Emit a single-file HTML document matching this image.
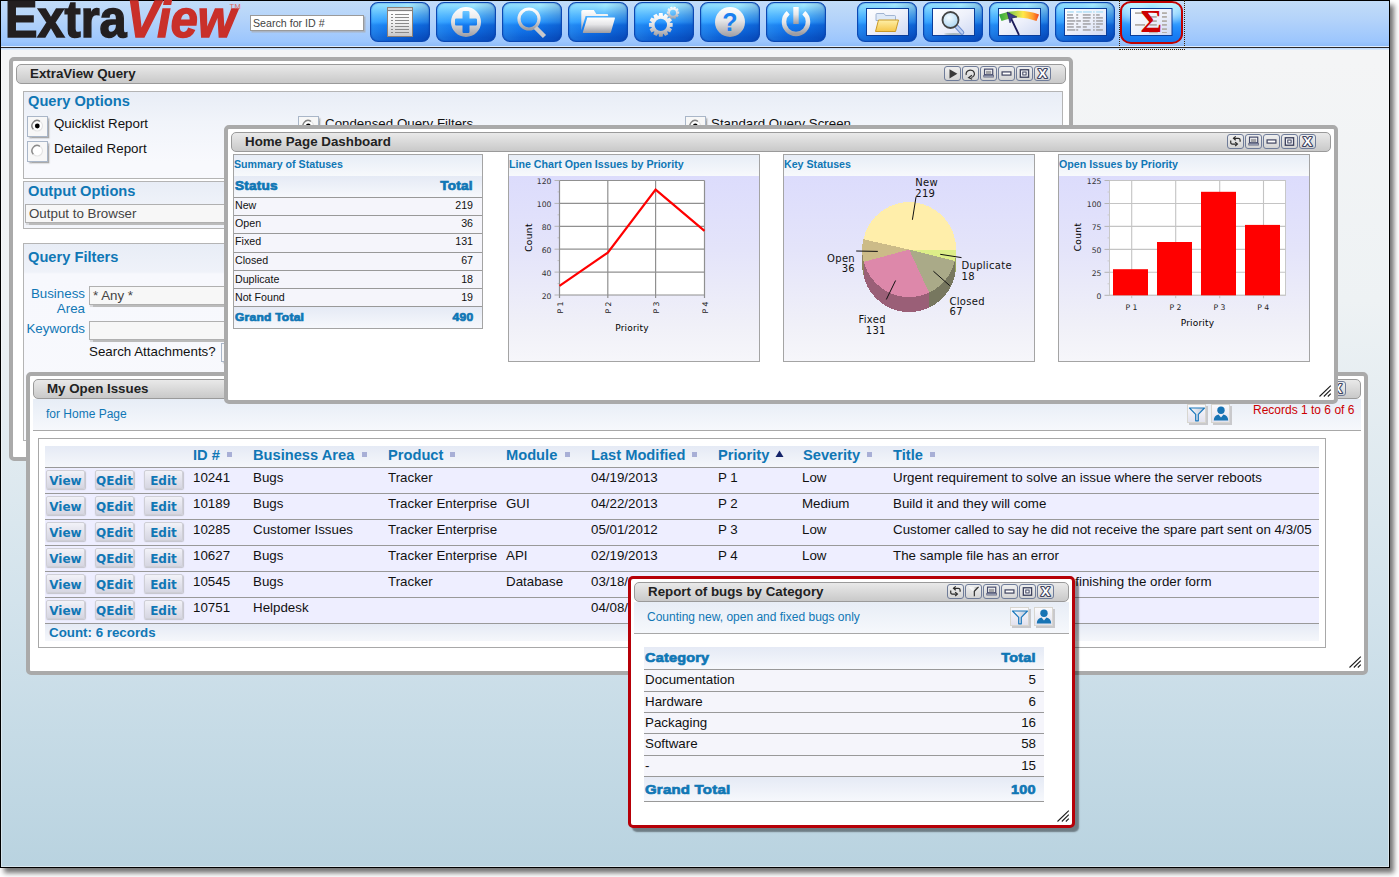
<!DOCTYPE html>
<html>
<head>
<meta charset="utf-8">
<title>ExtraView</title>
<style>
html,body{margin:0;padding:0;background:#fff;}
body{width:1399px;height:877px;overflow:hidden;position:relative;font-family:"Liberation Sans",Arial,sans-serif;font-size:13.33px;color:#111;}
#frame{position:absolute;left:0;top:0;width:1388px;height:866px;border:1px solid #000;box-shadow:4px 5px 5px rgba(0,0,0,.55),inset 0 0 0 1px rgba(255,255,255,.4);
 background:linear-gradient(#f4f5f6 0,#f4f5f6 60px,#eef2f4 300px,#d3e3ec 600px,#b9d3e0 866px);}
#content{position:absolute;left:0;top:0;width:1389px;height:867px;overflow:hidden}
.abs{position:absolute}
/* header */
#hdr{position:absolute;left:1px;top:1px;width:1388px;height:45px;background:linear-gradient(#c2dcf8 0,#b4d3fa 40%,#9cc6fd 90%,#8fbcf8 100%);}
#hdrline{position:absolute;left:1px;top:46px;width:1388px;height:2px;background:linear-gradient(#dcecff 0,#dcecff 40%,#2a2626 60%,#2a2626 100%);}
#hdrlow{position:absolute;left:1px;top:48px;width:1388px;height:2px;background:linear-gradient(#b8d6fa,#e4eefa);}
#logo{position:absolute;left:5px;top:-10px;font-weight:bold;font-size:51px;line-height:60px;white-space:nowrap;color:#231f20;letter-spacing:0;-webkit-text-stroke:1.5px #231f20;transform:scaleX(.953);transform-origin:0 0}
#logo i{color:#c9302a;letter-spacing:0;margin-left:0;-webkit-text-stroke:1.5px #c9302a}
#tm{position:absolute;left:229.5px;top:2.5px;font-size:7.5px;line-height:8px;color:#e0685e;letter-spacing:.3px}
#search{position:absolute;left:250px;top:15px;width:110px;height:14px;background:#fff;border:1px solid #9a9a9a;box-shadow:1.5px 1.5px 0 #a9b4c4;font-size:10.67px;line-height:15px;padding-left:2px;color:#444;box-sizing:content-box;white-space:nowrap}
.tb{position:absolute;top:2px;width:58px;height:38px;border:1px solid #0a48b4;border-radius:8px/7.5px;background:linear-gradient(105deg,rgba(90,195,255,.34) 0%,rgba(40,140,255,.1) 40%,rgba(0,40,150,0) 55%,rgba(0,30,130,.3) 100%),linear-gradient(#b0f2ff 0,#8adaff 14%,#56b8ff 32%,#2c9aff 50%,#1278ee 58%,#0e6ce2 75%,#0a5cd0 92%,#0c5ed2 100%);box-shadow:inset 0 0 1.5px #0838a0;}
.tb svg{position:absolute;left:0;top:0}
/* windows */
.win{position:absolute;border:4px solid #aaa;border-radius:5px;background:#fff;box-sizing:border-box;}
.tbar{position:absolute;box-sizing:border-box;left:3px;right:3px;top:3px;height:20px;border:1px solid #9a9a9a;border-radius:5px;background:linear-gradient(#e9e9e9,#d9d9d9 50%,#c9c9c9);font-weight:bold;font-size:13.33px;line-height:18px;color:#222;padding-left:13px;white-space:nowrap}
.h{color:#1077b5;font-weight:bold}

.ti{position:absolute;top:1px;width:15px;height:13px;border:1px solid #6f7c99;border-radius:3px;background:linear-gradient(rgba(255,255,255,.35),rgba(255,255,255,.1));}
.ti svg{position:absolute;left:0;top:0}
.pan{position:absolute;border:1px solid #b4b4b4;background:linear-gradient(#e8edf6 0,#f1f4fa 30px,#f8f9fd 70px);box-sizing:border-box}
.ph{position:absolute;left:4px;font-weight:bold;font-size:14.67px;color:#1077b5;white-space:nowrap;line-height:16px}
.rb{position:absolute;width:19px;height:19px;border:1px solid #a9b6c8;background:#f7f7f7;box-shadow:1.5px 1.5px 1.5px #aaa;box-sizing:content-box}
.rb svg{position:absolute;left:0;top:0}
.lbl{position:absolute;white-space:nowrap;font-size:13.33px;line-height:16px;color:#111}
.sel{position:absolute;border:1px solid #b0b0b0;background:#f7f7f7;box-shadow:1px 1.5px 1px #bbb;height:17px;font-size:13.33px;line-height:17px;color:#444;padding-left:3px;white-space:nowrap;box-sizing:content-box}
.sub{position:absolute;background:linear-gradient(#e7edf6,#f6f8fc);border-bottom:1px solid #a8a8a8;box-sizing:border-box}
.sub .t{position:absolute;font-size:12px;color:#1077b5;white-space:nowrap;line-height:14px}
.ib{position:absolute;width:17px;height:17px;border:1px solid #d8d6d0;background:linear-gradient(#fafafd,#e2e2ee);box-shadow:2px 2px 0 #c9c9cc}
.ib svg{position:absolute;left:0;top:0}
.box{position:absolute;border:1px solid #a8a8a8;box-sizing:border-box;background:#fff}
.row{position:absolute;left:0;right:0;height:25px;background:#eeeeff;border-top:1px solid #999;}
.row span{position:absolute;top:2px;white-space:nowrap;font-size:13.33px;line-height:16px;color:#111}
.hrow{position:absolute;left:0;right:0;background:linear-gradient(#e5eaf5,#f5f7fb)}
.hrow span{position:absolute;white-space:nowrap;font-weight:bold;font-size:14.67px;line-height:16px;color:#1077b5}
.hrow i{position:absolute;width:5px;height:5px;background:#a8afd6}
.btn{position:absolute;top:2px;width:37px;height:17px;border:1px solid #cfcfd6;border-radius:2px;background:linear-gradient(#f2f2f8,#e2e2ec 55%,#d6d6e2);box-shadow:.5px 1px 1px #c4c4cc;font-family:"DejaVu Sans","Liberation Sans",sans-serif;font-weight:bold;font-size:12px;line-height:21px;color:#1077b5;text-align:center;letter-spacing:0;overflow:hidden}
.grip{position:absolute;width:13px;height:13px}
.dp{position:absolute;border:1px solid #a4a4a4;box-sizing:border-box;background:#f6f6fb}
.dt{position:absolute;left:0;right:0;top:0;height:21px;background:linear-gradient(#e7edf6,#f7f9fc);font-weight:bold;font-size:10.67px;line-height:19px;color:#1077b5;padding-left:0;white-space:nowrap}
.ca{position:absolute;left:0;top:21px;width:250px;height:185px;background:linear-gradient(#dcdcfc 0,#e4e4fa 40%,#f0f0f8 80%,#f6f6fa 100%)}
.ca svg{position:absolute;left:0;top:0}
.sh{position:absolute;left:0;right:0;background:linear-gradient(#e5eaf5,#f6f8fc)}
.ab{position:absolute;top:2px;font-weight:bold;font-size:12px;line-height:15px;color:#1077b5;-webkit-text-stroke:.7px #1077b5;white-space:nowrap;transform:scaleX(1.13);transform-origin:0 50%;letter-spacing:.2px}
.ab.r{transform-origin:100% 50%}
.sr{position:absolute;left:0;right:0;height:17px;border-top:1px solid #999;background:#f5f5fb}
.sr span{position:absolute;top:1px;font-size:10.67px;line-height:14px;color:#111;white-space:nowrap}
.sr.rr span{font-size:13.33px;line-height:16px;top:2px}
.sr.sh{background:linear-gradient(#e5eaf5,#f6f8fc)}
</style>
</head>
<body>
<div id="frame"></div>
<div id="content">
 <div id="hdr"></div><div id="hdrline"></div><div id="hdrlow"></div>
 <div id="logo">Extra<i>View</i></div><div id="tm">TM</div>
 <div id="search">Search for ID #</div>
<svg width="0" height="0" style="position:absolute"><defs>
<linearGradient id="gw" x1="0" y1="0" x2="0" y2="1"><stop offset="0" stop-color="#ffffff"/><stop offset=".45" stop-color="#e6e6e8"/><stop offset="1" stop-color="#9c9ca2"/></linearGradient>
<linearGradient id="gp" x1="0" y1="0" x2="1" y2="1"><stop offset="0" stop-color="#ffffff"/><stop offset=".5" stop-color="#eef1fb"/><stop offset="1" stop-color="#cfd9f3"/></linearGradient>
<linearGradient id="gf" x1="0" y1="0" x2="0" y2="1"><stop offset="0" stop-color="#fff0a8"/><stop offset="1" stop-color="#f5c64a"/></linearGradient>
<linearGradient id="gg" x1="0" y1="0" x2="1" y2="0"><stop offset="0" stop-color="#2faa3c"/><stop offset=".35" stop-color="#9ed24a"/><stop offset=".6" stop-color="#ffe94a"/><stop offset=".85" stop-color="#ff9a2e"/><stop offset="1" stop-color="#f2451f"/></linearGradient>
<radialGradient id="gl" cx=".4" cy=".35" r=".7"><stop offset="0" stop-color="#f4fbff"/><stop offset="1" stop-color="#a9d4f2"/></radialGradient>
<linearGradient id="gd" x1="0" y1="0" x2="0" y2="1"><stop offset="0" stop-color="#ffffff"/><stop offset=".5" stop-color="#f0f0f0"/><stop offset="1" stop-color="#c8c8ca"/></linearGradient></defs></svg>
<div class="tb" style="left:370px;"><svg width="58" height="38" viewBox="1 1 58 38"><rect x="17" y="5" width="26" height="30" fill="#8c8078"/><rect x="18" y="9" width="24" height="25" fill="url(#gd)"/><rect x="18" y="6" width="24" height="2.500" fill="#d4d4d4"/><rect x="18" y="8.200" width="24" height=".9" fill="#777"/><rect x="21" y="12" width="2" height="1" fill="#888"/><rect x="25" y="12" width="14" height="1" fill="#8a8a8a"/><rect x="21" y="15" width="2" height="1" fill="#888"/><rect x="25" y="15" width="14" height="1" fill="#8a8a8a"/><rect x="21" y="18" width="2" height="1" fill="#888"/><rect x="25" y="18" width="14" height="1" fill="#8a8a8a"/><rect x="21" y="21" width="2" height="1" fill="#888"/><rect x="25" y="21" width="14" height="1" fill="#8a8a8a"/><rect x="21" y="24" width="2" height="1" fill="#888"/><rect x="25" y="24" width="14" height="1" fill="#8a8a8a"/><rect x="21" y="27" width="2" height="1" fill="#888"/><rect x="25" y="27" width="14" height="1" fill="#8a8a8a"/><rect x="21" y="30" width="2" height="1" fill="#888"/><rect x="25" y="30" width="14" height="1" fill="#8a8a8a"/></svg></div>
<div class="tb" style="left:436px;"><svg width="58" height="38" viewBox="1 1 58 38"><path fill-rule="evenodd" fill="url(#gw)" d="M30 5a15 15 0 1 0 0 30a15 15 0 1 0 0-30z M27.700 9h4.600a1.200 1.200 0 0 1 1.200 1.200v6.300h6.300a1.200 1.200 0 0 1 1.200 1.200v4.600a1.200 1.200 0 0 1 -1.200 1.200h-6.300v6.300a1.200 1.200 0 0 1 -1.200 1.200h-4.600a1.200 1.200 0 0 1 -1.200 -1.200v-6.300h-6.300a1.200 1.200 0 0 1 -1.200 -1.200v-4.600a1.200 1.200 0 0 1 1.200 -1.200h6.300v-6.300a1.200 1.200 0 0 1 1.200 -1.200z"/></svg></div>
<div class="tb" style="left:502px;"><svg width="58" height="38" viewBox="1 1 58 38"><circle cx="27" cy="17" r="10" fill="none" stroke="url(#gw)" stroke-width="3.2"/><path d="M33.5 25.5l9 9" stroke="#c9c9cc" stroke-width="4.5" stroke-linecap="butt"/></svg></div>
<div class="tb" style="left:568px;"><svg width="58" height="38" viewBox="1 1 58 38"><path fill="url(#gw)" d="M13.300 9.500a1.500 1.500 0 0 1 1.500-1.500h11l2.500 3.900h10.800a1 1 0 0 1 1 1v1.200h-22.500l-4.300 14.500z"/><path fill="url(#gw)" d="M19.300 15.500h26.800a.8 .8 0 0 1 .8 1.100l-4 13.600a1.200 1.200 0 0 1 -1.200 .8h-26.200a.7 .7 0 0 1 -.6-1z"/></svg></div>
<div class="tb" style="left:634px;"><svg width="58" height="38" viewBox="1 1 58 38"><path fill-rule="evenodd" fill="url(#gw)" d="M35.84 20.72L38.66 21.06L38.66 24.74L35.84 25.08L35.72 25.54L37.99 27.23L36.15 30.42L33.54 29.31L33.21 29.64L34.32 32.25L31.13 34.09L29.44 31.82L28.98 31.94L28.64 34.76L24.96 34.76L24.62 31.94L24.16 31.82L22.47 34.09L19.28 32.25L20.39 29.64L20.06 29.31L17.45 30.42L15.61 27.23L17.88 25.54L17.76 25.08L14.94 24.74L14.94 21.06L17.76 20.72L17.88 20.26L15.61 18.57L17.45 15.38L20.06 16.49L20.39 16.16L19.28 13.55L22.47 11.71L24.16 13.98L24.62 13.86L24.96 11.04L28.64 11.04L28.98 13.86L29.44 13.98L31.13 11.71L34.32 13.55L33.21 16.16L33.54 16.49L36.15 15.38L37.99 18.57L35.72 20.26z M20.6 22.9a6.2 6.2 0 1 0 12.4 0a6.2 6.2 0 1 0 -12.4 0z"/><path fill-rule="evenodd" fill="url(#gw)" d="M43.51 9.39L45.19 9.54L45.19 11.86L43.51 12.01L43.42 12.29L44.69 13.40L43.33 15.28L41.88 14.42L41.64 14.59L42.02 16.23L39.81 16.95L39.14 15.40L38.86 15.40L38.19 16.95L35.98 16.23L36.36 14.59L36.12 14.42L34.67 15.28L33.31 13.40L34.58 12.29L34.49 12.01L32.81 11.86L32.81 9.54L34.49 9.39L34.58 9.11L33.31 8.00L34.67 6.12L36.12 6.98L36.36 6.81L35.98 5.17L38.19 4.45L38.86 6.00L39.14 6.00L39.81 4.45L42.02 5.17L41.64 6.81L41.88 6.98L43.33 6.12L44.69 8.00L43.42 9.11z M36 10.7a3 3 0 1 0 6 0a3 3 0 1 0 -6 0z"/></svg></div>
<div class="tb" style="left:700px;"><svg width="58" height="38" viewBox="1 1 58 38"><circle cx="30" cy="20" r="15" fill="url(#gw)"/><text x="30" y="29" font-family="Liberation Sans, sans-serif" font-weight="bold" font-size="25" text-anchor="middle" fill="#1a80f0">?</text></svg></div>
<div class="tb" style="left:766px;"><svg width="58" height="38" viewBox="1 1 58 38"><path d="M22.200 10.800a12 12 0 1 0 15.600 0" fill="none" stroke="url(#gw)" stroke-width="4.500" stroke-linecap="butt"/><rect x="27.300" y="5" width="5.400" height="17" fill="url(#gw)"/></svg></div>
<div class="tb" style="left:857px;"><svg width="58" height="38" viewBox="1 1 58 38"><g transform="translate(0,-1)"><rect x="9.500" y="7.500" width="42" height="27" fill="url(#gp)" stroke="#0a3d9a" stroke-width="1"/><path d="M19 13.500a1 1 0 0 1 1-1h7l1.500 2h9a1 1 0 0 1 1 1v4h-19.500z" fill="#dfeaf8" stroke="#8fa6c8" stroke-width=".8"/><path d="M21.500 19h20l-3 11.500h-20z" fill="url(#gf)" stroke="#c99a28" stroke-width="1" stroke-linejoin="round"/></g></svg></div>
<div class="tb" style="left:923px;"><svg width="58" height="38" viewBox="1 1 58 38"><g transform="translate(0,-1)"><rect x="9.500" y="7.500" width="42" height="27" fill="url(#gp)" stroke="#0a3d9a" stroke-width="1"/><ellipse cx="31" cy="33" rx="10" ry=".8" fill="#9aa"/><path d="M34 26l5 5.500" stroke="#6f8fd0" stroke-width="4.500" stroke-linecap="round"/><path d="M34 26l5 5.500" stroke="#bcd0f4" stroke-width="2.500" stroke-linecap="round"/><circle cx="27.500" cy="19" r="8" fill="url(#gl)" stroke="#444" stroke-width="1.800"/></g></svg></div>
<div class="tb" style="left:989px;"><svg width="58" height="38" viewBox="1 1 58 38"><g transform="translate(0,-1)"><rect x="9.500" y="7.500" width="42" height="27" fill="url(#gp)" stroke="#0a3d9a" stroke-width="1"/><path d="M10 13.500Q30 6 50 13.500L47.500 20Q30 13 12.500 20z" fill="url(#gg)"/><path d="M19.500 12l10.500 22" stroke="#1c1c5a" stroke-width="1.800"/><path d="M18 11l10 5-5 1-2 5z" fill="#3a3a8a" stroke="#1c1c5a" stroke-width=".6"/></g></svg></div>
<div class="tb" style="left:1055px;"><svg width="58" height="38" viewBox="1 1 58 38"><g transform="translate(0,-1)"><rect x="9.500" y="7.500" width="42" height="27" fill="url(#gp)" stroke="#0a3d9a" stroke-width="1"/><rect x="12" y="10" width="6.8" height="1.900" fill="#bfe4f8"/><rect x="21.2" y="10" width="5.8" height="1.900" fill="#bfe4f8"/><rect x="27.8" y="10" width="9.1" height="1.900" fill="#bfe4f8"/><rect x="38.1" y="10" width="1.6" height="1.900" fill="#bfe4f8"/><rect x="41.1" y="10" width="7" height="1.900" fill="#bfe4f8"/><rect x="12" y="13.1" width="6" height="1.700" fill="#aaaaae"/><rect x="21.2" y="13.1" width="2" height="1.700" fill="#aaaaae"/><rect x="27.8" y="13.1" width="7.9" height="1.700" fill="#aaaaae"/><rect x="38.1" y="13.1" width="1.6" height="1.700" fill="#aaaaae"/><rect x="41.1" y="13.1" width="3.6" height="1.700" fill="#aaaaae"/><rect x="12" y="16" width="6.8" height="1.700" fill="#aaaaae"/><rect x="21.2" y="16" width="2" height="1.700" fill="#aaaaae"/><rect x="27.8" y="16" width="7.9" height="1.700" fill="#aaaaae"/><rect x="38.1" y="16" width="1.6" height="1.700" fill="#aaaaae"/><rect x="41.1" y="16" width="6.8" height="1.700" fill="#aaaaae"/><rect x="12" y="19.1" width="8.3" height="1.700" fill="#aaaaae"/><rect x="21.2" y="19.1" width="4.7" height="1.700" fill="#aaaaae"/><rect x="27.8" y="19.1" width="6.8" height="1.700" fill="#aaaaae"/><rect x="38.1" y="19.1" width="1.6" height="1.700" fill="#aaaaae"/><rect x="41.1" y="19.1" width="6.8" height="1.700" fill="#aaaaae"/><rect x="12" y="22.1" width="6.8" height="1.700" fill="#aaaaae"/><rect x="21.2" y="22.1" width="2" height="1.700" fill="#aaaaae"/><rect x="27.8" y="22.1" width="7.9" height="1.700" fill="#aaaaae"/><rect x="38.1" y="22.1" width="1.6" height="1.700" fill="#aaaaae"/><rect x="41.1" y="22.1" width="6.8" height="1.700" fill="#aaaaae"/><rect x="12" y="25.1" width="6.8" height="1.700" fill="#aaaaae"/><rect x="21.2" y="25.1" width="4.7" height="1.700" fill="#aaaaae"/><rect x="27.8" y="25.1" width="4" height="1.700" fill="#aaaaae"/><rect x="38.1" y="25.1" width="1.6" height="1.700" fill="#aaaaae"/><rect x="41.1" y="25.1" width="3.6" height="1.700" fill="#aaaaae"/><rect x="12" y="28.1" width="8.3" height="1.700" fill="#aaaaae"/><rect x="21.2" y="28.1" width="2" height="1.700" fill="#aaaaae"/><rect x="27.8" y="28.1" width="7.9" height="1.700" fill="#aaaaae"/><rect x="38.1" y="28.1" width="1.6" height="1.700" fill="#aaaaae"/><rect x="41.1" y="28.1" width="6.8" height="1.700" fill="#aaaaae"/></g></svg></div>
<div class="tb" style="left:1120px;top:1px;border:2px solid #c00000;border-radius:11px/10px;width:59px;height:39px;background:radial-gradient(ellipse 20px 12px at 13px 10px,rgba(255,255,255,.55),rgba(255,255,255,0)),radial-gradient(ellipse 20px 12px at 47px 10px,rgba(255,255,255,.55),rgba(255,255,255,0)),linear-gradient(#b8f4ff 0,#92deff 14%,#62c0ff 32%,#3aa2ff 50%,#2690fc 62%,#1a80f6 80%,#1474ee 100%);box-shadow:none;"><svg width="59" height="39" viewBox="1 1 59 39"><g transform="translate(0,-1)"><rect x="9.500" y="7.500" width="41.500" height="27" fill="url(#gp)" stroke="#0a3d9a" stroke-width="1"/><rect x="14.0" y="11.2" width="10" height="1.800" fill="#b3aeaa"/><rect x="14.0" y="23.0" width="10" height="1.800" fill="#b3aeaa"/><rect x="28.4" y="15.0" width="7.400" height="1.800" fill="#b3aeaa"/><rect x="28.4" y="19.2" width="7.400" height="1.800" fill="#b3aeaa"/><rect x="28.4" y="23.0" width="7.400" height="1.800" fill="#b3aeaa"/><rect x="28.0" y="31.0" width="8.800" height="1.200" fill="#c4b4b0"/><rect x="41.0" y="11.2" width="4.900" height="1.8" fill="#b3aeaa"/><rect x="41.0" y="15.0" width="4.900" height="1.8" fill="#b3aeaa"/><rect x="41.0" y="19.2" width="4.900" height="1.8" fill="#b3aeaa"/><rect x="41.0" y="23.0" width="4.900" height="1.8" fill="#b3aeaa"/><rect x="41.0" y="27.2" width="4.900" height="1.8" fill="#b3aeaa"/><rect x="41.0" y="31.0" width="4.900" height="1.0" fill="#b3aeaa"/><text x="30.3" y="30.7" font-family="Liberation Serif, serif" font-weight="bold" font-size="31" text-anchor="middle" fill="#cc0000" transform="translate(30.3 0) scale(1.06 1) translate(-30.3 0)">Σ</text></g></svg></div>
<div class="abs" style="left:1119px;top:0;width:64px;height:49px;border:1px dotted #3a2408;border-top:none"></div>
<div class="win" id="qwin" style="left:9px;top:57px;width:1064px;height:404px">
<div class="tbar" style="left:3px;top:3px;right:auto;width:1050px">ExtraView Query<div class="ti" style="left:927px"><svg width="15" height="13" viewBox="0 0 15.500 14"><path d="M4.500 2.300l8.500 5-8.500 5z" fill="#3a3a3a"/></svg></div><div class="ti" style="left:945px"><svg width="15" height="13" viewBox="0 0 15.500 14"><path d="M3.200 8.600A4.500 4 0 1 1 8.600 11.300" fill="none" stroke="#333" stroke-width="1.300"/><path d="M9.300 8.800L5.800 11.400L9.500 13.200" fill="none" stroke="#333" stroke-width="1.300"/></svg></div><div class="ti" style="left:963px"><svg width="15" height="13" viewBox="0 0 15.500 14"><rect x="3.500" y="2.300" width="8.800" height="6" fill="#fff" stroke="#474c6c" stroke-width="1.300"/><rect x="5" y="4" width="5.800" height="3.700" fill="#a4a4a8"/><rect x="2.300" y="8.600" width="11.200" height="2.600" fill="#474c6c"/><rect x="3" y="9.400" width="10" height=".8" fill="#e8eef8"/></svg></div><div class="ti" style="left:981px"><svg width="15" height="13" viewBox="0 0 15.500 14"><rect x="3" y="5.300" width="9.500" height="3.400" fill="#fff" stroke="#3f4460" stroke-width="1.300"/></svg></div><div class="ti" style="left:999px"><svg width="15" height="13" viewBox="0 0 15.500 14"><rect x="3.300" y="3" width="8.800" height="8" fill="#fff" stroke="#3f4460" stroke-width="1.500"/><rect x="5.900" y="5.400" width="3.600" height="3.200" fill="#fff" stroke="#3f4460" stroke-width="1.100"/></svg></div><div class="ti" style="left:1017px"><svg width="15" height="13" viewBox="0 0 15.500 14"><text x="7.700" y="12.100" font-family="Liberation Sans, sans-serif" font-weight="bold" font-size="13" text-anchor="middle" fill="#fff" stroke="#3f4460" stroke-width="2.300" stroke-linejoin="round" paint-order="stroke" transform="translate(7.700 0) scale(1.120 1) translate(-7.700 0)">X</text></svg></div></div>
<div class="pan" style="left:10px;top:30px;width:1040px;height:88px"><div class="ph" style="top:1px">Query Options</div><div class="rb" style="left:3px;top:24px"><svg width="19" height="19"><circle cx="9.300" cy="8.800" r="5.200" fill="#fff" stroke="#e4e4e4" stroke-width="1.200"/><path d="M5.300 12.200a5.200 5.200 0 0 1 6.600-7.900" fill="none" stroke="#808080" stroke-width="1.400"/><circle cx="9.300" cy="9" r="2.400" fill="#000"/></svg></div><div class="lbl" style="left:30px;top:24px">Quicklist Report</div><div class="rb" style="left:3px;top:49px"><svg width="19" height="19"><circle cx="9.300" cy="8.800" r="5.200" fill="#fff" stroke="#e4e4e4" stroke-width="1.200"/><path d="M5.300 12.200a5.200 5.200 0 0 1 6.600-7.900" fill="none" stroke="#8a8a8a" stroke-width="1.400"/></svg></div><div class="lbl" style="left:30px;top:49px">Detailed Report</div><div class="rb" style="left:274px;top:24px"><svg width="19" height="19"><circle cx="9.300" cy="8.800" r="5.200" fill="#fff" stroke="#e4e4e4" stroke-width="1.200"/><path d="M5.300 12.200a5.200 5.200 0 0 1 6.600-7.900" fill="none" stroke="#808080" stroke-width="1.400"/><circle cx="9.300" cy="9" r="2.400" fill="#000"/></svg></div><div class="lbl" style="left:301px;top:24px">Condensed Query Filters</div><div class="rb" style="left:661px;top:24px"><svg width="19" height="19"><circle cx="9.300" cy="8.800" r="5.200" fill="#fff" stroke="#e4e4e4" stroke-width="1.200"/><path d="M5.300 12.200a5.200 5.200 0 0 1 6.600-7.900" fill="none" stroke="#808080" stroke-width="1.400"/><circle cx="9.300" cy="9" r="2.400" fill="#000"/></svg></div><div class="lbl" style="left:687px;top:24px">Standard Query Screen</div></div>
<div class="pan" style="left:10px;top:120px;width:1040px;height:48px"><div class="ph" style="top:1px">Output Options</div><div class="sel" style="left:1px;top:22px;width:300px">Output to Browser</div></div>
<div class="pan" style="left:10px;top:182px;width:1040px;height:198px;background:linear-gradient(#e8edf6 0,#eff2f9 28px,#f7f8fd 30px,#f8f9fd 100%)"><div class="ph" style="top:5px">Query Filters</div><div class="lbl" style="left:0;width:61px;text-align:right;top:42px;color:#1077b5;white-space:normal;line-height:15px">Business Area</div><div class="sel" style="left:65px;top:42px;width:300px">* Any *</div><div class="lbl" style="left:0;width:61px;text-align:right;top:77px;color:#1077b5">Keywords</div><div class="sel" style="left:65px;top:77px;width:300px"></div><div class="lbl" style="left:65px;top:100px">Search Attachments?</div><div class="rb" style="left:197px;top:99px;height:17px"></div></div>
</div>
<div class="win" id="iwin" style="left:26px;top:372px;width:1342px;height:303px">
<div class="tbar" style="left:3px;top:3px;right:auto;width:1328px;height:20px;line-height:18px">My Open Issues<div class="ti" style="left:1223px"><svg width="15" height="13" viewBox="0 0 15.500 14"><path d="M5.800 3.600H10.800Q12.700 3.600 12.700 5.400V7.400" fill="none" stroke="#2c2c2c" stroke-width="1.300"/><path d="M8 1.500L5.600 3.600L8 5.700" fill="none" stroke="#2c2c2c" stroke-width="1.300"/><path d="M9.400 9.800H4.400Q2.600 9.800 2.600 8V5.800" fill="none" stroke="#2c2c2c" stroke-width="1.300"/><path d="M7.400 7.700L9.800 9.800L7.400 11.900" fill="none" stroke="#2c2c2c" stroke-width="1.300"/></svg></div><div class="ti" style="left:1241px"><svg width="15" height="13" viewBox="0 0 15.500 14"><rect x="3.500" y="2.300" width="8.800" height="6" fill="#fff" stroke="#474c6c" stroke-width="1.300"/><rect x="5" y="4" width="5.800" height="3.700" fill="#a4a4a8"/><rect x="2.300" y="8.600" width="11.200" height="2.600" fill="#474c6c"/><rect x="3" y="9.400" width="10" height=".8" fill="#e8eef8"/></svg></div><div class="ti" style="left:1259px"><svg width="15" height="13" viewBox="0 0 15.500 14"><rect x="3" y="5.300" width="9.500" height="3.400" fill="#fff" stroke="#3f4460" stroke-width="1.300"/></svg></div><div class="ti" style="left:1277px"><svg width="15" height="13" viewBox="0 0 15.500 14"><rect x="3.300" y="3" width="8.800" height="8" fill="#fff" stroke="#3f4460" stroke-width="1.500"/><rect x="5.900" y="5.400" width="3.600" height="3.200" fill="#fff" stroke="#3f4460" stroke-width="1.100"/></svg></div><div class="ti" style="left:1295px"><svg width="15" height="13" viewBox="0 0 15.500 14"><text x="7.700" y="12.100" font-family="Liberation Sans, sans-serif" font-weight="bold" font-size="13" text-anchor="middle" fill="#fff" stroke="#3f4460" stroke-width="2.300" stroke-linejoin="round" paint-order="stroke" transform="translate(7.700 0) scale(1.120 1) translate(-7.700 0)">X</text></svg></div></div>
<div class="sub" style="left:3px;top:23px;width:1328px;height:32px"><div class="t" style="left:13px;top:8px">for Home Page</div><div class="ib" style="left:1154px;top:5px"><svg width="18" height="18"><defs><linearGradient id="fg" x1="0" y1="0" x2="1" y2="0"><stop offset="0" stop-color="#fff"/><stop offset="1" stop-color="#b8c4d8"/></linearGradient></defs><path d="M1.500 3h15l-6.200 6.300v6.500h-2.600v-6.500z" fill="url(#fg)" stroke="#1a78bc" stroke-width="1.200" stroke-linejoin="round"/></svg></div><div class="ib" style="left:1178px;top:5px"><svg width="18" height="18"><circle cx="9" cy="5.300" r="3.700" fill="#1874b4"/><path d="M1.800 15.500c0-3.500 1.700-5.500 4.700-6l2.500 3 2.500-3c3 .5 4.700 2.500 4.700 6z" fill="#1874b4"/></svg></div><div class="t" style="left:1220px;top:4px;color:#cc0000">Records 1 to 6 of 6</div></div>
<div class="box" style="left:8px;top:62px;width:1288px;height:210px"><div class="abs" style="left:6px;top:7px;width:1274px;height:200px"><div class="hrow" style="top:0;height:21px"><span style="left:148px;top:1px">ID #</span><i style="left:182px;top:6px"></i><span style="left:208px;top:1px">Business Area</span><i style="left:317px;top:6px"></i><span style="left:343px;top:1px">Product</span><i style="left:405px;top:6px"></i><span style="left:461px;top:1px">Module</span><i style="left:520px;top:6px"></i><span style="left:546px;top:1px">Last Modified</span><i style="left:647px;top:6px"></i><span style="left:673px;top:1px">Priority</span><span style="left:758px;top:1px">Severity</span><i style="left:822px;top:6px"></i><span style="left:848px;top:1px">Title</span><i style="left:885px;top:6px"></i><svg class="abs" style="left:730px;top:4px" width="9" height="8"><path d="M4.500 .500l4 6.500h-8z" fill="#15246a"/></svg></div><div class="row" style="top:21px"><div class="btn" style="left:1px">View</div><div class="btn" style="left:50px">QEdit</div><div class="btn" style="left:99px">Edit</div><span style="left:148px">10241</span><span style="left:208px">Bugs</span><span style="left:343px">Tracker</span><span style="left:546px">04/19/2013</span><span style="left:673px">P 1</span><span style="left:757px">Low</span><span style="left:848px">Urgent requirement to solve an issue where the server reboots</span></div><div class="row" style="top:47px"><div class="btn" style="left:1px">View</div><div class="btn" style="left:50px">QEdit</div><div class="btn" style="left:99px">Edit</div><span style="left:148px">10189</span><span style="left:208px">Bugs</span><span style="left:343px">Tracker Enterprise</span><span style="left:461px">GUI</span><span style="left:546px">04/22/2013</span><span style="left:673px">P 2</span><span style="left:757px">Medium</span><span style="left:848px">Build it and they will come</span></div><div class="row" style="top:73px"><div class="btn" style="left:1px">View</div><div class="btn" style="left:50px">QEdit</div><div class="btn" style="left:99px">Edit</div><span style="left:148px">10285</span><span style="left:208px">Customer Issues</span><span style="left:343px">Tracker Enterprise</span><span style="left:546px">05/01/2012</span><span style="left:673px">P 3</span><span style="left:757px">Low</span><span style="left:848px">Customer called to say he did not receive the spare part sent on 4/3/05</span></div><div class="row" style="top:99px"><div class="btn" style="left:1px">View</div><div class="btn" style="left:50px">QEdit</div><div class="btn" style="left:99px">Edit</div><span style="left:148px">10627</span><span style="left:208px">Bugs</span><span style="left:343px">Tracker Enterprise</span><span style="left:461px">API</span><span style="left:546px">02/19/2013</span><span style="left:673px">P 4</span><span style="left:757px">Low</span><span style="left:848px">The sample file has an error</span></div><div class="row" style="top:125px"><div class="btn" style="left:1px">View</div><div class="btn" style="left:50px">QEdit</div><div class="btn" style="left:99px">Edit</div><span style="left:148px">10545</span><span style="left:208px">Bugs</span><span style="left:343px">Tracker</span><span style="left:461px">Database</span><span style="left:546px">03/18/2013</span><span style="left:673px">P 4</span><span style="left:757px">Medium</span><span style="left:848px">Application hangs shortly after finishing the order form</span></div><div class="row" style="top:151px"><div class="btn" style="left:1px">View</div><div class="btn" style="left:50px">QEdit</div><div class="btn" style="left:99px">Edit</div><span style="left:148px">10751</span><span style="left:208px">Helpdesk</span><span style="left:546px">04/08/2013</span><span style="left:673px">P 4</span><span style="left:757px">Low</span><span style="left:848px">Password reset request</span></div><div class="row" style="top:177px;height:17px;background:linear-gradient(#e5eaf5,#f5f7fb)"><span style="left:4px;top:1px;font-weight:bold;color:#1077b5">Count: 6 records</span></div></div></div>
<div class="grip" style="left:1319px;top:279px"><svg width="13" height="13"><path d="M.5 12.500L11.800 1.700M4.800 12.500L11.800 5.700M8.800 12.500L11.800 9.700" stroke="#1c1c1c" stroke-width="1.1"/></svg></div></div>
<div class="win" id="dwin" style="left:224px;top:125px;width:1114px;height:279px">
<div class="tbar" style="left:3px;top:3px;right:auto;width:1100px;padding-left:13px">Home Page Dashboard<div class="ti" style="left:995px"><svg width="15" height="13" viewBox="0 0 15.500 14"><path d="M5.800 3.600H10.800Q12.700 3.600 12.700 5.400V7.400" fill="none" stroke="#2c2c2c" stroke-width="1.300"/><path d="M8 1.500L5.600 3.600L8 5.700" fill="none" stroke="#2c2c2c" stroke-width="1.300"/><path d="M9.400 9.800H4.400Q2.600 9.800 2.600 8V5.800" fill="none" stroke="#2c2c2c" stroke-width="1.300"/><path d="M7.400 7.700L9.800 9.800L7.400 11.900" fill="none" stroke="#2c2c2c" stroke-width="1.300"/></svg></div><div class="ti" style="left:1013px"><svg width="15" height="13" viewBox="0 0 15.500 14"><rect x="3.500" y="2.300" width="8.800" height="6" fill="#fff" stroke="#474c6c" stroke-width="1.300"/><rect x="5" y="4" width="5.800" height="3.700" fill="#a4a4a8"/><rect x="2.300" y="8.600" width="11.200" height="2.600" fill="#474c6c"/><rect x="3" y="9.400" width="10" height=".8" fill="#e8eef8"/></svg></div><div class="ti" style="left:1031px"><svg width="15" height="13" viewBox="0 0 15.500 14"><rect x="3" y="5.300" width="9.500" height="3.400" fill="#fff" stroke="#3f4460" stroke-width="1.300"/></svg></div><div class="ti" style="left:1049px"><svg width="15" height="13" viewBox="0 0 15.500 14"><rect x="3.300" y="3" width="8.800" height="8" fill="#fff" stroke="#3f4460" stroke-width="1.500"/><rect x="5.900" y="5.400" width="3.600" height="3.200" fill="#fff" stroke="#3f4460" stroke-width="1.100"/></svg></div><div class="ti" style="left:1067px"><svg width="15" height="13" viewBox="0 0 15.500 14"><text x="7.700" y="12.100" font-family="Liberation Sans, sans-serif" font-weight="bold" font-size="13" text-anchor="middle" fill="#fff" stroke="#3f4460" stroke-width="2.300" stroke-linejoin="round" paint-order="stroke" transform="translate(7.700 0) scale(1.120 1) translate(-7.700 0)">X</text></svg></div></div>
<div class="dp" style="left:5px;top:25px;width:250px;height:175px"><div class="dt">Summary of Statuses</div><div class="sh" style="top:21px;height:21px"><b class="ab" style="left:1px;top:3px">Status</b><b class="ab r" style="right:9px;top:3px">Total</b></div><div class="sr" style="top:42px;height:19px"><span style="left:1px;top:0px">New</span><span style="right:9px;top:0px">219</span></div><div class="sr" style="top:60px;height:19px"><span style="left:1px;top:0px">Open</span><span style="right:9px;top:0px">36</span></div><div class="sr" style="top:78px;height:19px"><span style="left:1px;top:0px">Fixed</span><span style="right:9px;top:0px">131</span></div><div class="sr" style="top:97px;height:19px"><span style="left:1px;top:0px">Closed</span><span style="right:9px;top:0px">67</span></div><div class="sr" style="top:115px;height:19px"><span style="left:1px;top:1px">Duplicate</span><span style="right:9px;top:1px">18</span></div><div class="sr" style="top:133px;height:19px"><span style="left:1px;top:1px">Not Found</span><span style="right:9px;top:1px">19</span></div><div class="sr sh" style="top:151px;height:21px"><b class="ab" style="left:1px;top:3px;font-size:10.67px">Grand Total</b><b class="ab r" style="right:9px;top:3px;font-size:10.67px">490</b></div></div>
<div class="dp" style="left:280px;top:25px;width:252px;height:208px"><div class="dt">Line Chart Open Issues by Priority</div><div class="ca"><svg width="250" height="185" viewBox="509 176 250 185"><rect x="559.5" y="180.5" width="145.0" height="114.5" fill="#fff"/><path d="M559.5 180.5H704.5" stroke="#909090" stroke-width="1.2"/><path d="M554.5 180.5H559.5" stroke="#b4b4b4" stroke-width="1"/><path d="M557.5 191.9H559.5" stroke="#c4c4c4" stroke-width="1"/><text x="551.5" y="184.1" font-family="DejaVu Sans, sans-serif" font-size="7.7" text-anchor="end" fill="#333">120</text><path d="M559.5 203.4H704.5" stroke="#909090" stroke-width="1.2"/><path d="M554.5 203.4H559.5" stroke="#b4b4b4" stroke-width="1"/><path d="M557.5 214.8H559.5" stroke="#c4c4c4" stroke-width="1"/><text x="551.5" y="207.0" font-family="DejaVu Sans, sans-serif" font-size="7.7" text-anchor="end" fill="#333">100</text><path d="M559.5 226.3H704.5" stroke="#909090" stroke-width="1.2"/><path d="M554.5 226.3H559.5" stroke="#b4b4b4" stroke-width="1"/><path d="M557.5 237.8H559.5" stroke="#c4c4c4" stroke-width="1"/><text x="551.5" y="229.9" font-family="DejaVu Sans, sans-serif" font-size="7.7" text-anchor="end" fill="#333">80</text><path d="M559.5 249.2H704.5" stroke="#909090" stroke-width="1.2"/><path d="M554.5 249.2H559.5" stroke="#b4b4b4" stroke-width="1"/><path d="M557.5 260.6H559.5" stroke="#c4c4c4" stroke-width="1"/><text x="551.5" y="252.8" font-family="DejaVu Sans, sans-serif" font-size="7.7" text-anchor="end" fill="#333">60</text><path d="M559.5 272.1H704.5" stroke="#909090" stroke-width="1.2"/><path d="M554.5 272.1H559.5" stroke="#b4b4b4" stroke-width="1"/><path d="M557.5 283.6H559.5" stroke="#c4c4c4" stroke-width="1"/><text x="551.5" y="275.7" font-family="DejaVu Sans, sans-serif" font-size="7.7" text-anchor="end" fill="#333">40</text><path d="M559.5 295.0H704.5" stroke="#909090" stroke-width="1.2"/><path d="M554.5 295.0H559.5" stroke="#b4b4b4" stroke-width="1"/><text x="551.5" y="298.6" font-family="DejaVu Sans, sans-serif" font-size="7.7" text-anchor="end" fill="#333">20</text><path d="M559.5 180.5V298" stroke="#909090" stroke-width="1.2"/><text transform="translate(562.9 313.6) rotate(-90)" font-family="DejaVu Sans, sans-serif" font-size="7.7" fill="#222">P 1</text><path d="M607.8 180.5V298" stroke="#909090" stroke-width="1.2"/><text transform="translate(611.1999999999999 313.6) rotate(-90)" font-family="DejaVu Sans, sans-serif" font-size="7.7" fill="#222">P 2</text><path d="M655.6 180.5V298" stroke="#909090" stroke-width="1.2"/><text transform="translate(659.0 313.6) rotate(-90)" font-family="DejaVu Sans, sans-serif" font-size="7.7" fill="#222">P 3</text><path d="M704.5 180.5V298" stroke="#909090" stroke-width="1.2"/><text transform="translate(707.9 313.6) rotate(-90)" font-family="DejaVu Sans, sans-serif" font-size="7.7" fill="#222">P 4</text><polyline points="559.5,285.8 607.8,252.6 655.6,189.7 704.5,230.9" fill="none" stroke="#ff0000" stroke-width="2.2" stroke-linejoin="miter"/><text transform="translate(531.5 237.5) rotate(-90)" font-family="DejaVu Sans, sans-serif" font-size="9" text-anchor="middle" fill="#000" letter-spacing=".4">Count</text><text x="632" y="330.5" font-family="DejaVu Sans, sans-serif" font-size="9" text-anchor="middle" fill="#000" letter-spacing=".2">Priority</text></svg></div></div>
<div class="dp" style="left:555px;top:25px;width:252px;height:208px"><div class="dt">Key Statuses</div><div class="ca"><svg width="250" height="185" viewBox="784 176 250 185"><path d="M862.20 249.60A47 47.5 0 0 0 863.78 261.82v15A47 47.5 0 0 1 862.20 264.60z" fill="#8f835f" shape-rendering="crispEdges"/><path d="M863.78 261.82A47 47.5 0 0 0 929.09 292.64v15A47 47.5 0 0 1 863.78 276.82z" fill="#9a5f77" shape-rendering="crispEdges"/><path d="M929.09 292.64A47 47.5 0 0 0 954.85 260.90v15A47 47.5 0 0 1 929.09 307.64z" fill="#77775f" shape-rendering="crispEdges"/><path d="M954.85 260.90A47 47.5 0 0 0 956.20 249.60v15A47 47.5 0 0 1 954.85 275.90z" fill="#9aa65f" shape-rendering="crispEdges"/><path d="M909.2 249.6L956.20 249.60A47 47.5 0 0 0 863.33 239.23z" fill="#ffeeaa" shape-rendering="crispEdges"/><path d="M909.2 249.6L863.33 239.23A47 47.5 0 0 0 863.78 261.82z" fill="#ccbb88" shape-rendering="crispEdges"/><path d="M909.2 249.6L863.78 261.82A47 47.5 0 0 0 929.09 292.64z" fill="#dd88aa" shape-rendering="crispEdges"/><path d="M909.2 249.6L929.09 292.64A47 47.5 0 0 0 954.85 260.90z" fill="#aaaa88" shape-rendering="crispEdges"/><path d="M909.2 249.6L954.85 260.90A47 47.5 0 0 0 956.20 249.60z" fill="#ddee88" shape-rendering="crispEdges"/><path d="M916 197.1L912.4 219.8" stroke="#111" stroke-width="1"/><path d="M856.2 251L877.8 251.4" stroke="#111" stroke-width="1"/><path d="M895.6 280.5L886.3 299.5" stroke="#111" stroke-width="1"/><path d="M933.4 271.2L949.8 285.7" stroke="#111" stroke-width="1"/><path d="M940.2 254.3L961.5 257.6" stroke="#111" stroke-width="1"/><text x="915.3" y="185.5" font-family="DejaVu Sans, sans-serif" font-size="10" text-anchor="start" fill="#111" letter-spacing=".3">New</text><text x="915.3" y="196.5" font-family="DejaVu Sans, sans-serif" font-size="10" text-anchor="start" fill="#111" letter-spacing=".3">219</text><text x="855" y="261.5" font-family="DejaVu Sans, sans-serif" font-size="10" text-anchor="end" fill="#111" letter-spacing=".3">Open</text><text x="855" y="272.3" font-family="DejaVu Sans, sans-serif" font-size="10" text-anchor="end" fill="#111" letter-spacing=".3">36</text><text x="885.8" y="322.7" font-family="DejaVu Sans, sans-serif" font-size="10" text-anchor="end" fill="#111" letter-spacing=".3">Fixed</text><text x="885.8" y="333.8" font-family="DejaVu Sans, sans-serif" font-size="10" text-anchor="end" fill="#111" letter-spacing=".3">131</text><text x="949.5" y="304.7" font-family="DejaVu Sans, sans-serif" font-size="10" text-anchor="start" fill="#111" letter-spacing=".3">Closed</text><text x="949.5" y="315.3" font-family="DejaVu Sans, sans-serif" font-size="10" text-anchor="start" fill="#111" letter-spacing=".3">67</text><text x="961.5" y="268.8" font-family="DejaVu Sans, sans-serif" font-size="10" text-anchor="start" fill="#111" letter-spacing=".3">Duplicate</text><text x="961.5" y="279.5" font-family="DejaVu Sans, sans-serif" font-size="10" text-anchor="start" fill="#111" letter-spacing=".3">18</text></svg></div></div>
<div class="dp" style="left:830px;top:25px;width:252px;height:208px"><div class="dt">Open Issues by Priority</div><div class="ca"><svg width="250" height="185" viewBox="1059 176 250 185"><rect x="1109.5" y="180.5" width="176.0" height="114.80000000000001" fill="#fff" stroke="#c8c8c8" stroke-width="1"/><path d="M1109.5 180.5H1285.5" stroke="#c4c4c4" stroke-width="1.1"/><path d="M1104.5 180.5H1109.5" stroke="#b4b4b4" stroke-width="1"/><path d="M1107.5 192.0H1109.5" stroke="#ccc" stroke-width="1"/><text x="1101.5" y="184.1" font-family="DejaVu Sans, sans-serif" font-size="7.7" text-anchor="end" fill="#333">125</text><path d="M1109.5 203.5H1285.5" stroke="#c4c4c4" stroke-width="1.1"/><path d="M1104.5 203.5H1109.5" stroke="#b4b4b4" stroke-width="1"/><path d="M1107.5 214.9H1109.5" stroke="#ccc" stroke-width="1"/><text x="1101.5" y="207.1" font-family="DejaVu Sans, sans-serif" font-size="7.7" text-anchor="end" fill="#333">100</text><path d="M1109.5 226.4H1285.5" stroke="#c4c4c4" stroke-width="1.1"/><path d="M1104.5 226.4H1109.5" stroke="#b4b4b4" stroke-width="1"/><path d="M1107.5 237.9H1109.5" stroke="#ccc" stroke-width="1"/><text x="1101.5" y="230.0" font-family="DejaVu Sans, sans-serif" font-size="7.7" text-anchor="end" fill="#333">75</text><path d="M1109.5 249.4H1285.5" stroke="#c4c4c4" stroke-width="1.1"/><path d="M1104.5 249.4H1109.5" stroke="#b4b4b4" stroke-width="1"/><path d="M1107.5 260.9H1109.5" stroke="#ccc" stroke-width="1"/><text x="1101.5" y="253.0" font-family="DejaVu Sans, sans-serif" font-size="7.7" text-anchor="end" fill="#333">50</text><path d="M1109.5 272.3H1285.5" stroke="#c4c4c4" stroke-width="1.1"/><path d="M1104.5 272.3H1109.5" stroke="#b4b4b4" stroke-width="1"/><path d="M1107.5 283.8H1109.5" stroke="#ccc" stroke-width="1"/><text x="1101.5" y="275.9" font-family="DejaVu Sans, sans-serif" font-size="7.7" text-anchor="end" fill="#333">25</text><path d="M1109.5 295.3H1285.5" stroke="#c4c4c4" stroke-width="1.1"/><path d="M1104.5 295.3H1109.5" stroke="#b4b4b4" stroke-width="1"/><text x="1101.5" y="298.9" font-family="DejaVu Sans, sans-serif" font-size="7.7" text-anchor="end" fill="#333">0</text><path d="M1131.7 180.5V298.3" stroke="#c4c4c4" stroke-width="1.1"/><path d="M1175.7 180.5V298.3" stroke="#c4c4c4" stroke-width="1.1"/><path d="M1219.7 180.5V298.3" stroke="#c4c4c4" stroke-width="1.1"/><path d="M1263.5 180.5V298.3" stroke="#c4c4c4" stroke-width="1.1"/><rect x="1113" y="269.2" width="35" height="26.1" fill="#ff0000"/><rect x="1157" y="242" width="35" height="53.3" fill="#ff0000"/><rect x="1201" y="191.8" width="35" height="103.5" fill="#ff0000"/><rect x="1245" y="224.9" width="35" height="70.4" fill="#ff0000"/><text x="1131.4" y="309.8" font-family="DejaVu Sans, sans-serif" font-size="7.7" text-anchor="middle" fill="#222">P 1</text><text x="1175.4" y="309.8" font-family="DejaVu Sans, sans-serif" font-size="7.7" text-anchor="middle" fill="#222">P 2</text><text x="1219.4" y="309.8" font-family="DejaVu Sans, sans-serif" font-size="7.7" text-anchor="middle" fill="#222">P 3</text><text x="1263.2" y="309.8" font-family="DejaVu Sans, sans-serif" font-size="7.7" text-anchor="middle" fill="#222">P 4</text><text transform="translate(1081 237) rotate(-90)" font-family="DejaVu Sans, sans-serif" font-size="9" text-anchor="middle" fill="#000" letter-spacing=".4">Count</text><text x="1197.5" y="326" font-family="DejaVu Sans, sans-serif" font-size="9" text-anchor="middle" fill="#000" letter-spacing=".2">Priority</text></svg></div></div>
<div class="grip" style="left:1091px;top:255px"><svg width="13" height="13"><path d="M.5 12.500L11.800 1.700M4.800 12.500L11.800 5.700M8.800 12.500L11.800 9.700" stroke="#1c1c1c" stroke-width="1.1"/></svg></div></div>
<div class="win" id="rwin" style="left:628px;top:576px;width:447px;height:252px;border:3px solid #b60008;box-shadow:4px 4px 1.5px rgba(0,0,0,.42)">
<div class="tbar" style="left:3px;top:3px;right:auto;width:435px">Report of bugs by Category<div class="ti" style="left:312px"><svg width="15" height="13" viewBox="0 0 15.500 14"><path d="M5.800 3.600H10.800Q12.700 3.600 12.700 5.400V7.400" fill="none" stroke="#2c2c2c" stroke-width="1.300"/><path d="M8 1.500L5.600 3.600L8 5.700" fill="none" stroke="#2c2c2c" stroke-width="1.300"/><path d="M9.400 9.800H4.400Q2.600 9.800 2.600 8V5.800" fill="none" stroke="#2c2c2c" stroke-width="1.300"/><path d="M7.400 7.700L9.800 9.800L7.400 11.900" fill="none" stroke="#2c2c2c" stroke-width="1.300"/></svg></div><div class="ti" style="left:330px"><svg width="15" height="13" viewBox="0 0 15.500 14"><defs><linearGradient id="tfg" x1="0" y1="0" x2="1" y2="0"><stop offset="0" stop-color="#fff"/><stop offset=".5" stop-color="#f0f0f0"/><stop offset="1" stop-color="#8a8a8a"/></linearGradient></defs><path d="M2.600 2.200h10.600l-4.600 4.600v5h-1.600v-5z" fill="url(#tfg)"/><path d="M13.200 2l-4.600 4.800v5.200" fill="none" stroke="#2c2c2c" stroke-width="1.300"/></svg></div><div class="ti" style="left:348px"><svg width="15" height="13" viewBox="0 0 15.500 14"><rect x="3.500" y="2.300" width="8.800" height="6" fill="#fff" stroke="#474c6c" stroke-width="1.300"/><rect x="5" y="4" width="5.800" height="3.700" fill="#a4a4a8"/><rect x="2.300" y="8.600" width="11.200" height="2.600" fill="#474c6c"/><rect x="3" y="9.400" width="10" height=".8" fill="#e8eef8"/></svg></div><div class="ti" style="left:366px"><svg width="15" height="13" viewBox="0 0 15.500 14"><rect x="3" y="5.300" width="9.500" height="3.400" fill="#fff" stroke="#3f4460" stroke-width="1.300"/></svg></div><div class="ti" style="left:384px"><svg width="15" height="13" viewBox="0 0 15.500 14"><rect x="3.300" y="3" width="8.800" height="8" fill="#fff" stroke="#3f4460" stroke-width="1.500"/><rect x="5.900" y="5.400" width="3.600" height="3.200" fill="#fff" stroke="#3f4460" stroke-width="1.100"/></svg></div><div class="ti" style="left:402px"><svg width="15" height="13" viewBox="0 0 15.500 14"><text x="7.700" y="12.100" font-family="Liberation Sans, sans-serif" font-weight="bold" font-size="13" text-anchor="middle" fill="#fff" stroke="#3f4460" stroke-width="2.300" stroke-linejoin="round" paint-order="stroke" transform="translate(7.700 0) scale(1.120 1) translate(-7.700 0)">X</text></svg></div></div>
<div class="sub" style="left:3px;top:23px;width:435px;height:32px"><div class="t" style="left:13px;top:8px">Counting new, open and fixed bugs only</div><div class="ib" style="left:376px;top:5px"><svg width="18" height="18"><defs><linearGradient id="fg" x1="0" y1="0" x2="1" y2="0"><stop offset="0" stop-color="#fff"/><stop offset="1" stop-color="#b8c4d8"/></linearGradient></defs><path d="M1.500 3h15l-6.200 6.300v6.500h-2.600v-6.500z" fill="url(#fg)" stroke="#1a78bc" stroke-width="1.200" stroke-linejoin="round"/></svg></div><div class="ib" style="left:400px;top:5px"><svg width="18" height="18"><circle cx="9" cy="5.300" r="3.700" fill="#1874b4"/><path d="M1.800 15.500c0-3.500 1.700-5.500 4.700-6l2.500 3 2.500-3c3 .5 4.700 2.500 4.700 6z" fill="#1874b4"/></svg></div></div>
<div class="abs" style="left:13px;top:68px;width:400px;height:160px"><div class="sh" style="top:0;height:22px"><b class="ab" style="left:1px;top:3px;font-size:13.3px;transform:scaleX(1.085)">Category</b><b class="ab r" style="right:8px;top:3px;font-size:13.3px;transform:scaleX(1.085)">Total</b></div><div class="sr rr" style="top:22px;height:21px"><span style="left:1px">Documentation</span><span style="right:8px">5</span></div><div class="sr rr" style="top:44px;height:21px"><span style="left:1px">Hardware</span><span style="right:8px">6</span></div><div class="sr rr" style="top:65px;height:21px"><span style="left:1px">Packaging</span><span style="right:8px">16</span></div><div class="sr rr" style="top:86px;height:21px"><span style="left:1px">Software</span><span style="right:8px">58</span></div><div class="sr rr" style="top:108px;height:21px"><span style="left:1px">-</span><span style="right:8px">15</span></div><div class="sr sh" style="top:129px;height:24px;border-bottom:1px solid #999"><b class="ab" style="left:1px;top:5px;font-size:13.3px;transform:scaleX(1.125)">Grand Total</b><b class="ab r" style="right:8px;top:5px;font-size:13.3px;transform:scaleX(1.085)">100</b></div></div><div class="grip" style="left:426px;top:230px"><svg width="13" height="13"><path d="M.5 12.500L11.800 1.700M4.800 12.500L11.800 5.700M8.800 12.500L11.800 9.700" stroke="#1c1c1c" stroke-width="1.1"/></svg></div></div>
</div>
</body>
</html>
